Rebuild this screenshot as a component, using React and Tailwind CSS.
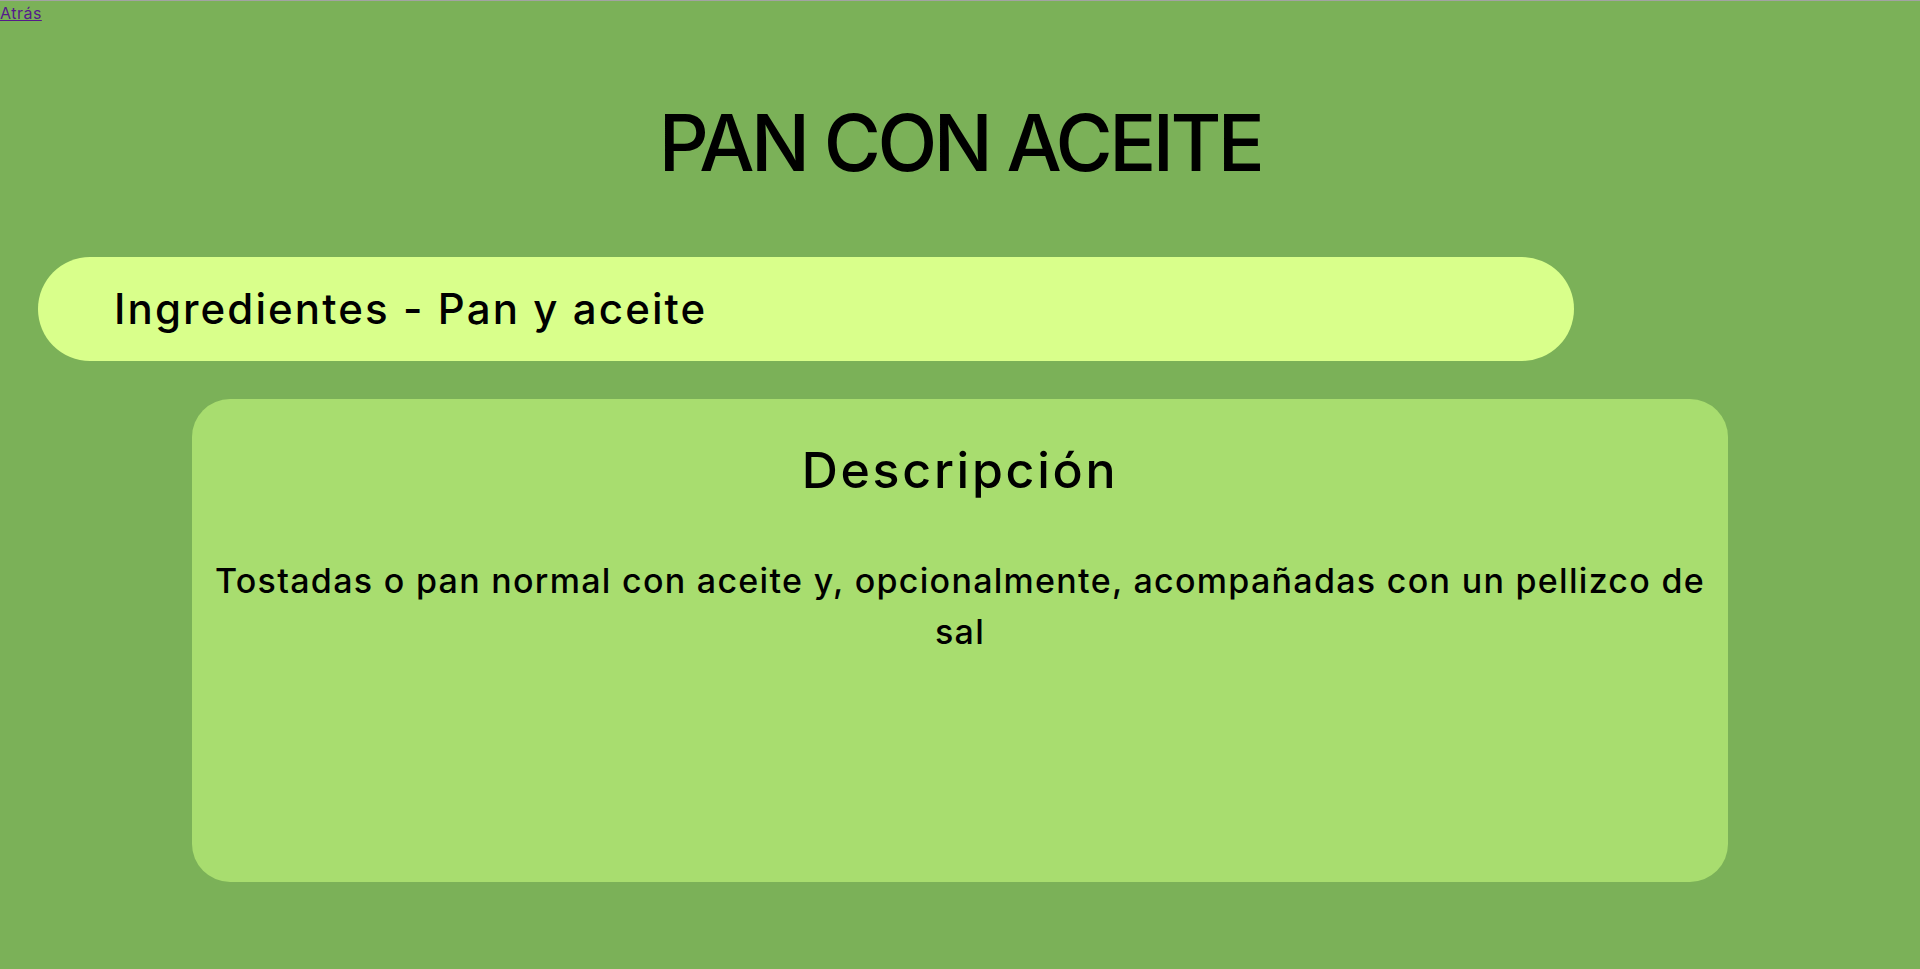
export default function App() {
  return (
    <div className="min-h-screen bg-[#7bb158] border-t border-[#a3a3a3] text-black" style={{ fontFamily: "Inter, 'Noto Sans', sans-serif" }}>
      <div className="mt-[1px] h-[22px] text-[16px] leading-[22px] tracking-[0.03em]">
        <a href="#" className="text-[#551a8b] underline">Atrás</a>
      </div>
      <h1 className="mt-[80px] text-center text-[78px] leading-none font-medium tracking-[-0.045em]">PAN CON ACEITE</h1>
      <div className="mt-[75px] ml-[38px] w-[1536px] h-[104px] rounded-full bg-[#d9ff8b] flex items-center pl-[76px]">
        <h2 className="text-[42px] leading-none font-medium tracking-[0.05em]">Ingredientes - Pan y aceite</h2>
      </div>
      <div className="mt-[38px] ml-[192px] w-[1536px] h-[483px] rounded-[38px] bg-[#a8dd6f] pt-[46px] flex flex-col items-center">
        <h2 className="text-[50px] leading-none font-medium tracking-[0.055em]">Descripción</h2>
        <p className="mt-[60px] text-[34px] leading-[51px] text-center font-medium tracking-[0.038em]">
          <span className="block whitespace-nowrap">Tostadas o pan normal con aceite y, opcionalmente, acompañadas con un pellizco de</span>
          <span className="block">sal</span>
        </p>
      </div>
    </div>
  );
}
